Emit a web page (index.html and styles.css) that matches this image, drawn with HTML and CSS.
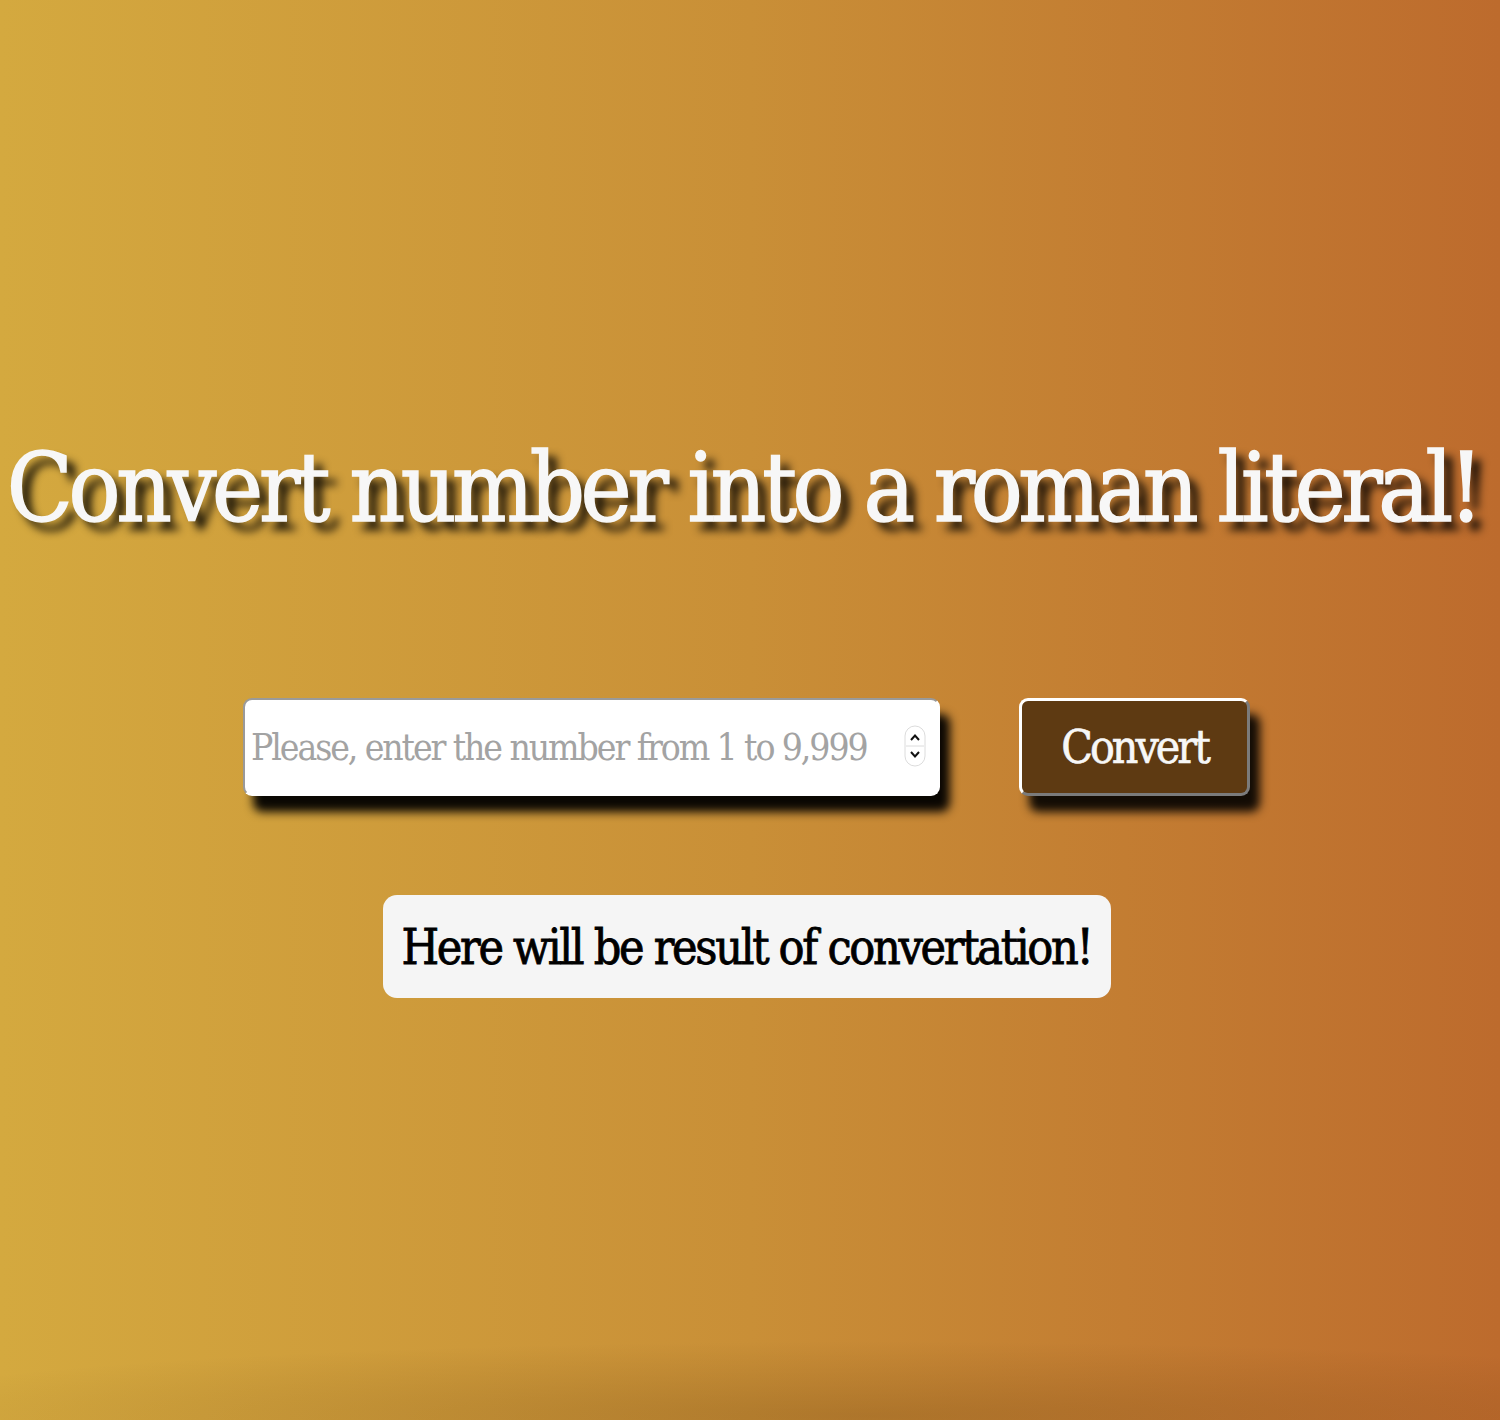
FILE: index.html
```html
<!DOCTYPE html>
<html lang="en">
<head>
<meta charset="utf-8">
<title>Roman converter</title>
<link rel="stylesheet" href="styles.css">
</head>
<body>
<main class="page">
  <h1 class="title">Convert number into a roman literal!</h1>
  <form class="controls" onsubmit="return false">
    <div class="field">
      <input class="number-input" type="number" min="1" max="9999" placeholder="Please, enter the number from 1 to 9,999">
      <svg class="spinner" width="22" height="42" viewBox="0 0 22 42" aria-hidden="true">
        <rect x="1" y="1" width="20" height="40" rx="10" fill="#fff" stroke="#dcdcdc"/>
        <line x1="2" y1="21" x2="20" y2="21" stroke="#dcdcdc"/>
        <path d="M7 15 L11 10.5 L15 15" fill="none" stroke="#111" stroke-width="2"/>
        <path d="M7 27 L11 31.5 L15 27" fill="none" stroke="#111" stroke-width="2"/>
      </svg>
    </div>
    <button class="convert-btn" type="submit">Convert</button>
  </form>
  <div class="result">Here will be result of convertation!</div>
</main>
</body>
</html>
```

FILE: styles.css
```css
* { box-sizing: border-box; }
html {
  height: 100%;
  background:
    radial-gradient(ellipse 1050px 75px at 58% 1416px, rgba(70,35,0,0.2), rgba(70,35,0,0.08) 60%, rgba(70,35,0,0) 100%) no-repeat,
    linear-gradient(to right, #d4a93f 0%, #c98f37 50%, #bd6b2d 100%);
}
body {
  margin: 0;
  min-height: 1420px;
  font-family: "DejaVu Serif Condensed", "DejaVu Serif", serif;
}
.page {
  display: flex;
  flex-direction: column;
  align-items: center;
  padding-top: 428px;
}
.title {
  margin: 0 0 0 -14px;
  font-weight: normal;
  font-size: 96px;
  line-height: 120px;
  color: #f7f7f7;
  letter-spacing: -4.3px;
  -webkit-text-stroke: 1.5px #f7f7f7;
  text-shadow: 9px 9px 9px rgba(0,0,0,0.9);
  white-space: nowrap;
}
.controls {
  display: flex;
  align-items: center;
  gap: 79px;
  margin: 150px 0 0 -7px;
}
.field {
  position: relative;
  display: flex;
}
.number-input {
  width: 697px;
  height: 98px;
  padding: 0 14px 0 6px;
  border: 2px solid #fff;
  border-top-color: #9a9a9a;
  border-left-color: #9a9a9a;
  border-radius: 9px;
  background: #fff;
  font-family: inherit;
  font-size: 37px;
  letter-spacing: -2.1px;
  color: #333;
  box-shadow: 10px 16px 10px rgba(0,0,0,0.95);
  outline: none;
  -moz-appearance: textfield;
}
.number-input::placeholder { color: #a3a3a3; }
.number-input::-webkit-inner-spin-button,
.number-input::-webkit-outer-spin-button {
  -webkit-appearance: none;
  margin: 0;
}
.spinner {
  position: absolute;
  left: 661px;
  top: 27px;
  pointer-events: none;
}
.convert-btn {
  width: 231px;
  height: 98px;
  border: 3px solid #fff;
  border-right-color: #7b7b7b;
  border-bottom-color: #7b7b7b;
  border-radius: 9px;
  background: #5e3a12;
  color: #f7f7f7;
  font-family: inherit;
  font-size: 46px;
  letter-spacing: -3px;
  -webkit-text-stroke: 0.6px #f7f7f7;
  box-shadow: 10px 16px 10px rgba(0,0,0,0.9);
  cursor: pointer;
}
.result {
  margin-top: 99px;
  margin-left: -7px;
  width: 728px;
  height: 103px;
  display: flex;
  align-items: center;
  justify-content: center;
  background: #f5f5f5;
  border-radius: 14px;
  font-size: 48px;
  letter-spacing: -2.3px;
  -webkit-text-stroke: 0.8px #000;
  color: #000;
}
```
